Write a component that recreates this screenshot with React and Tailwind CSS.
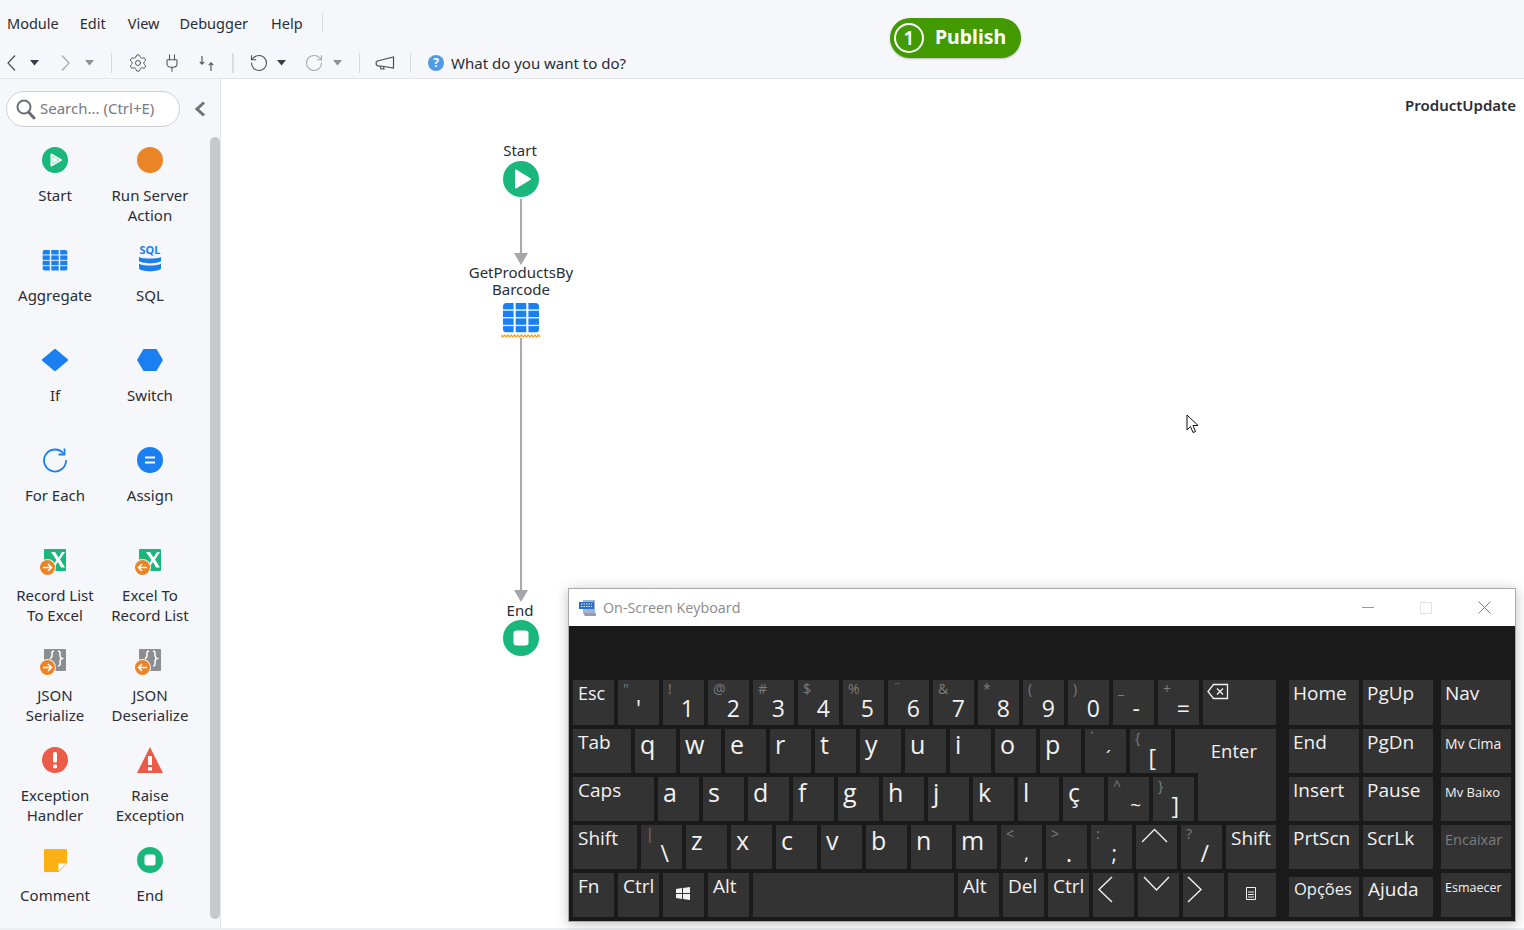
import React from "react";
import { Settings, Plug, RotateCcw, RotateCw } from "lucide-react";

const menuItems = [
  ["Module", "ml-[7px]"],
  ["Edit", "ml-[21px]"],
  ["View", "ml-[22px]"],
  ["Debugger", "ml-[20px]"],
  ["Help", "ml-[23px]"],
];

const Caret = ({ className, light }) => (
  <svg width="9" height="6" viewBox="0 0 9 6" className={className}>
    <path d="M0 0h9L4.5 5.5z" fill={light ? "#8c8f96" : "#3a3d45"} />
  </svg>
);

const NavChevron = ({ d, color, className }) => (
  <svg width="9" height="16" viewBox="0 0 9 16" fill="none" stroke={color} strokeWidth="1.2" className={className}>
    <path d={d} />
  </svg>
);

const ToolDivider = ({ className }) => <div className={`w-px h-5 bg-[#d9dbdf] ${className}`} />;

const Megaphone = () => (
  <svg width="20" height="14" viewBox="0 0 20 14" fill="none" stroke="#4a4d55" strokeWidth="1.2">
    <path d="M18.5 1v11L6 10H2.5L1.2 8.5V6L2.5 5z" />
    <path d="M5 10l1 3h3l-.6-2.6" />
  </svg>
);

const SwapArrows = () => (
  <svg width="17" height="17" viewBox="0 0 17 17" fill="none" stroke="#55585f" strokeWidth="1.2">
    <path d="M4 1v8M1.8 6.800L4 9.200l2.200-2.400" />
    <path d="M13 16V8M10.800 10.200L13 7.800l2.200 2.400" />
  </svg>
);

const Header = () => (
  <header className="h-[79px] border-b border-[#e3e4e7] flex shrink-0">
    <div className="w-[890px] flex flex-col">
      <nav className="flex items-center h-5 mt-[13px] text-[14.5px] leading-5 text-[#2a2d36]">
        {menuItems.map(([name, cls]) => (
          <span key={name} className={cls}>
            {name}
          </span>
        ))}
        <div className="w-px h-5 bg-[#dcdde0] ml-[19px]" />
      </nav>
      <div className="flex items-center h-6 mt-[18px] text-[15px] text-[#2a2d36]">
        <NavChevron d="M8 .5L1 8l7 7.500" color="#4a4d55" className="ml-[7px]" />
        <Caret className="ml-[14px]" />
        <NavChevron d="M1 .5L8 8l-7 7.500" color="#a5a7ac" className="ml-[22px]" />
        <Caret light className="ml-[15px]" />
        <ToolDivider className="ml-[17px]" />
        <Settings size={20} strokeWidth={1.2} color="#55585f" className="ml-[16px]" />
        <Plug size={20} strokeWidth={1.3} color="#55585f" className="ml-[14px]" />
        <div className="ml-[16px] flex">
          <SwapArrows />
        </div>
        <div className="w-[2px] h-5 bg-[#dcdde0] ml-[17px]" />
        <RotateCcw size={20} strokeWidth={1.3} color="#4a4d55" className="ml-[15px]" />
        <Caret className="ml-[8px]" />
        <RotateCw size={20} strokeWidth={1.3} color="#a5a7ac" className="ml-[18px]" />
        <Caret light className="ml-[9px]" />
        <ToolDivider className="ml-[17px]" />
        <div className="ml-[15px] flex">
          <Megaphone />
        </div>
        <ToolDivider className="ml-[15px]" />
        <div className="ml-[17px] w-4 h-4 rounded-full bg-[#4f9be8] text-white text-[12px] font-bold leading-4 text-center">
          ?
        </div>
        <span className="ml-[7px]">What do you want to do?</span>
      </div>
    </div>
    <div className="mt-[18px] w-[131px] h-10 rounded-full bg-[#429a00] shadow-[0_1px_2px_rgba(0,0,0,0.25)] flex items-center pl-[4px]">
      <div className="w-[30px] h-[30px] rounded-full border-2 border-white text-white text-[19px] font-semibold flex items-center justify-center">
        1
      </div>
      <span className="ml-[11px] -mt-[2px] text-white text-[19.500px] font-bold leading-none">Publish</span>
    </div>
  </header>
);

const BLUE = "#1a80f2";
const GREEN = "#19b77b";
const ORANGE = "#ea8427";
const RED = "#ec5a48";

const GridIcon = ({ w = 26, h = 21 }) => (
  <svg width={w} height={h} viewBox="0 0 36 30">
    <defs>
      <clipPath id={`grid-${w}`}>
        <rect width="36" height="29.500" rx="3.500" />
      </clipPath>
    </defs>
    <g clipPath={`url(#grid-${w})`}>
      {[0, 1, 2].map((c) =>
        [0, 1, 2, 3].map((r) => (
          <rect key={`${c}-${r}`} x={c * 12.7} y={r * 7.7} width="10.6" height="6.4" fill={BLUE} />
        ))
      )}
    </g>
  </svg>
);

const PlayIcon = () => (
  <svg width="26" height="26" viewBox="0 0 26 26">
    <circle cx="13" cy="13" r="13" fill={GREEN} />
    <path d="M9.500 7.500l9.500 5.500-9.500 5.500z" fill="none" stroke="#fff" strokeWidth="2" strokeLinejoin="round" />
    <path d="M10.500 9.500l6 3.500-6 3.500z" fill="#fff" />
  </svg>
);

const StopIcon = () => (
  <svg width="26" height="26" viewBox="0 0 26 26">
    <circle cx="13" cy="13" r="13" fill={GREEN} />
    <rect x="7.500" y="7.500" width="11" height="11" rx="2.500" fill="#fff" />
  </svg>
);

const SqlIcon = () => (
  <svg width="26" height="30" viewBox="0 0 26 30" className="-mt-[2px] overflow-visible">
    <text x="13" y="9.500" textAnchor="middle" fontSize="11" fontWeight="700" fontFamily="'Noto Sans', sans-serif" fill={BLUE}>
      SQL
    </text>
    <path d="M2 13c3 2 19 2 22 0v4c-3 3-19 3-22 0z" fill={BLUE} />
    <path d="M2 19.500c3 2.800 19 2.800 22 0v5c-2 3.600-20 3.600-22 0z" fill={BLUE} />
  </svg>
);

const BadgeIcon = ({ color, back, children }) => (
  <svg width="26" height="26" viewBox="0 0 26 26" className="overflow-visible">
    <rect x="2" y="2" width="22" height="22" rx="1" fill={color} />
    {children}
    <circle cx="5.500" cy="20.500" r="8.500" fill="#f6f7fa" />
    <circle cx="5.500" cy="20.500" r="7.500" fill={ORANGE} />
    {back ? (
      <path d="M10 20.500H1.500M5 17L1.500 20.500 5 24" stroke="#fff" strokeWidth="1.600" fill="none" />
    ) : (
      <path d="M1 20.500h8.500M6 17l3.500 3.500L6 24" stroke="#fff" strokeWidth="1.600" fill="none" />
    )}
  </svg>
);

const ExcelMark = () => <path d="M9 5h4l3.500 5.500L20 5h3l-5 7.500 5 8h-4l-3-5.500-4 5.500H9.500l5-7.500z" fill="#fff" />;
const JsonMark = () => (
  <>
    <path d="M12 4c-2.500 0-2 2-2 4s-.5 3-2 3.500" stroke="#fff" strokeWidth="1.500" fill="none" />
    <path d="M16 4c2.500 0 2 2 2 4s.5 3 2 3.500c-1.500.5-2 1.500-2 3.500s.5 4-2 4" stroke="#fff" strokeWidth="1.500" fill="none" />
  </>
);

const tools = [
  ["Start", <PlayIcon />],
  ["Run Server Action", <svg width="26" height="26"><circle cx="13" cy="13" r="13" fill={ORANGE} /></svg>],
  ["Aggregate", <GridIcon />],
  ["SQL", <SqlIcon />],
  ["If", <svg width="26" height="22" viewBox="0 0 26 22"><path d="M11.500.8a2 2 0 0 1 3 0L25.500 10a1.300 1.300 0 0 1 0 2L14.500 21.200a2 2 0 0 1-3 0L.5 12a1.300 1.300 0 0 1 0-2z" fill={BLUE} /></svg>],
  ["Switch", <svg width="26" height="22" viewBox="0 0 26 22"><path d="M6.500 0h13L26 11l-6.500 11h-13L0 11z" fill={BLUE} /></svg>],
  ["For Each", <svg width="26" height="26" viewBox="0 0 26 26" fill="none" stroke={BLUE} strokeWidth="1.800"><path d="M21.500 6.500A11 11 0 1 0 24 13" /><path d="M22.500 1.500v6h-6" /></svg>],
  ["Assign", <svg width="26" height="26" viewBox="0 0 26 26"><circle cx="13" cy="13" r="13" fill={BLUE} /><path d="M8 10.500h10M8 15.500h10" stroke="#fff" strokeWidth="2" /></svg>],
  ["Record List To Excel", <BadgeIcon color={GREEN}><ExcelMark /></BadgeIcon>],
  ["Excel To Record List", <BadgeIcon color={GREEN} back><ExcelMark /></BadgeIcon>],
  ["JSON Serialize", <BadgeIcon color="#8c8d90"><JsonMark /></BadgeIcon>],
  ["JSON Deserialize", <BadgeIcon color="#8c8d90" back><JsonMark /></BadgeIcon>],
  ["Exception Handler", <svg width="26" height="26" viewBox="0 0 26 26"><circle cx="13" cy="13" r="13" fill={RED} /><rect x="11" y="5" width="4" height="10.500" rx="1.500" fill="#fff" /><rect x="11" y="17.500" width="4" height="3.800" rx="1" fill="#fff" /></svg>],
  ["Raise Exception", <svg width="26" height="26" viewBox="0 0 26 26"><path d="M13 0l13 26H0z" fill={RED} /><rect x="11" y="9" width="4" height="9" fill="#fff" /><rect x="11" y="20" width="4" height="3.500" fill="#fff" /></svg>],
  ["Comment", <svg width="23" height="23" viewBox="0 0 23 23"><path d="M1.500 0h20A1.500 1.500 0 0 1 23 1.500V14.500L14.500 23h-13A1.500 1.500 0 0 1 0 21.500v-20A1.500 1.500 0 0 1 1.500 0z" fill="#fdb013" /><path d="M14.500 22v-7.500H22z" fill="#fff" /></svg>],
  ["End", <StopIcon />],
];

const Sidebar = () => (
  <aside className="w-[221px] shrink-0 border-r border-[#e3e4e7] flex">
    <div className="w-[210px]">
      <div className="flex items-center mt-[12px]">
        <div className="ml-[6px] w-[174px] h-9 rounded-full bg-white border border-[#cfd0d4] flex items-center pl-[8px]">
          <svg width="22" height="22" viewBox="0 0 22 22" fill="none" stroke="#6b6e75">
            <circle cx="9" cy="9" r="6.500" strokeWidth="2" />
            <path d="M13.500 14l5.500 6" strokeWidth="3" strokeLinecap="round" />
          </svg>
          <span className="ml-[3px] -mt-[2px] text-[15px] text-[#777a80]">Search... (Ctrl+E)</span>
        </div>
        <svg width="12" height="16" viewBox="0 0 12 16" fill="none" stroke="#6f7278" strokeWidth="3" className="ml-[14px]">
          <path d="M10 1.500L3 8l7 6.500" />
        </svg>
      </div>
      <div className="grid grid-cols-[94px_96px] pl-[8px] mt-[20px]">
        {tools.map(([name, icon]) => (
          <div key={name} className="h-[100px] flex flex-col items-center text-center">
            <div className="h-[26px] flex items-center justify-center">{icon}</div>
            <div className="mt-[12px] text-[15px] leading-5 text-[#2a2d36] w-[92px]">{name}</div>
          </div>
        ))}
      </div>
    </div>
    <div className="w-[10px] h-[782px] mt-[58px] rounded-full bg-[#c8c9cd]" />
  </aside>
);

const FlowLine = ({ h }) => <div className="w-[2px] bg-[#a9aaae]" style={{ height: h }} />;
const FlowArrow = () => (
  <svg width="14" height="12" viewBox="0 0 14 12" className="-mt-[1px]">
    <path d="M0 0h14L7 12z" fill="#a5a6aa" />
  </svg>
);

const Diagram = () => (
  <div className="absolute left-[200px] top-[63px] w-[200px] flex flex-col items-center text-[15px] leading-[17px] text-[#2a2d36]">
    <span className="-ml-[2px]">Start</span>
    <svg width="36" height="36" viewBox="0 0 36 36" className="mt-[2px]">
      <circle cx="18" cy="18" r="18" fill={GREEN} />
      <path d="M13 9.500l14 8.500-14 8.500z" fill="#fff" stroke="#fff" strokeWidth="2" strokeLinejoin="round" />
    </svg>
    <div className="mt-[2px]">
      <FlowLine h={55} />
    </div>
    <FlowArrow />
    <span className="text-center -mt-[1px]">
      GetProductsBy
      <br />
      Barcode
    </span>
    <div className="mt-[5px] flex">
      <GridIcon w={36} h={30} />
    </div>
    <svg width="40" height="4" viewBox="0 0 40 4" fill="none" stroke="#f0a030" strokeWidth="1.200" className="mt-[1px]">
      <path d="M0 1l1.700 2 1.700-2 1.700 2 1.700-2 1.700 2 1.700-2 1.700 2 1.700-2 1.700 2 1.700-2 1.700 2 1.700-2 1.700 2 1.700-2 1.700 2 1.700-2 1.700 2 1.700-2 1.700 2 1.700-2 1.700 2 1.700-2 1.700 2" />
    </svg>
    <FlowLine h={253} />
    <FlowArrow />
    <span className="-ml-[2px]">End</span>
    <svg width="36" height="36" viewBox="0 0 36 36" className="mt-[1px]">
      <circle cx="18" cy="18" r="18" fill={GREEN} />
      <rect x="10.500" y="10.500" width="15" height="15" rx="3" fill="#fff" />
    </svg>
  </div>
);

const MouseCursor = () => (
  <svg width="14" height="20" viewBox="0 0 14 20" className="absolute left-[965px] top-[335px]">
    <path d="M1 1v15l3.500-3.500 2.500 6 2.500-1-2.500-6h5z" fill="#fff" stroke="#111" strokeWidth="1" />
  </svg>
);

// shift symbol, main symbol, right margin of the main symbol
const row1 = [
  ['"', "'", "mr-[18px]"], ["!", "1", "mr-[10px]"], ["@", "2", "mr-[9px]"], ["#", "3", "mr-[9px]"],
  ["$", "4", "mr-[9px]"], ["%", "5", "mr-[10px]"], ["¨", "6", "mr-[9px]"], ["&", "7", "mr-[9px]"],
  ["*", "8", "mr-[9px]"], ["(", "9", "mr-[9px]"], [")", "0", "mr-[9px]"], ["_", "-", "mr-[14px]"], ["+", "=", "mr-[9px]"],
];

const Key = ({ w = 41, className = "", children }) => (
  <div className={`bg-[#333333] shrink-0 h-full flex flex-col ${className}`} style={{ width: w }}>
    {children}
  </div>
);

const LabelKey = ({ w, label, size = "text-[19px]", color = "text-[#f2f2f2]", pad = "pl-[5px] pt-[1px]", className = "" }) => (
  <Key w={w} className={className}>
    <span className={`leading-[24px] whitespace-nowrap ${pad} ${size} ${color}`}>{label}</span>
  </Key>
);

const LetterKey = ({ label }) => (
  <Key>
    <span className="pl-[5px] text-[25px] leading-[30px] text-[#f2f2f2]">{label}</span>
  </Key>
);

const SymbolKey = ({ up, main, mr = "mr-[11px]", size = "text-[23px]" }) => (
  <Key>
    <span className="pl-[5px] pt-[1px] text-[14px] leading-[15px] text-[#7d7d7d]">{up}</span>
    <span className={`self-end leading-[24px] text-[#f2f2f2] ${mr} ${size}`}>{main}</span>
  </Key>
);

const Chevron = ({ d, w, h, className }) => (
  <svg width={w} height={h} viewBox={`0 0 ${w} ${h}`} fill="none" stroke="#f2f2f2" strokeWidth="1.400" className={className}>
    <path d={d} />
  </svg>
);

const Row = ({ children, h = "h-[44px]" }) => <div className={`flex gap-1 ${h}`}>{children}</div>;

const MainKeys = () => (
  <div className="w-[703px] flex flex-col gap-1">
    <Row h="h-[45px]">
      <LabelKey label="Esc" size="text-[18px]" />
      {row1.map(([up, main, mr]) => (
        <SymbolKey key={main} up={up} main={main} mr={mr} />
      ))}
      <Key w={73}>
        <svg width="22" height="17" viewBox="0 0 22 17" fill="none" stroke="#f2f2f2" strokeWidth="1.300" className="ml-[4px] mt-[3px]">
          <path d="M6.500 1.500h14v14h-14L1 8.500zM10 5.500l6 6M16 5.500l-6 6" />
        </svg>
      </Key>
    </Row>
    <Row>
      <LabelKey w={58} label="Tab" />
      {"qwertyuiop".split("").map((k) => (
        <LetterKey key={k} label={k} />
      ))}
      <SymbolKey up="`" main="´" mr="mr-[15px]" size="text-[19px]" />
      <SymbolKey up="{" main="[" mr="mr-[15px]" />
      <Key w={101}>
        <span className="self-end mr-[19px] mt-[8px] text-[18.500px] leading-[28px] text-[#f2f2f2]">Enter</span>
      </Key>
    </Row>
    <Row>
      <LabelKey w={81} label="Caps" />
      {"asdfghjkl".split("").map((k) => (
        <LetterKey key={k} label={k} />
      ))}
      <LetterKey label="ç" />
      <SymbolKey up="^" main="~" mr="mr-[8px]" size="text-[19px]" />
      <SymbolKey up="}" main="]" mr="mr-[15px]" />
      <Key w={78} className="-mt-1 !h-[48px]" />
    </Row>
    <Row>
      <LabelKey w={64} label="Shift" />
      <SymbolKey up="|" main="\" mr="mr-[13px]" />
      {"zxcvbnm".split("").map((k) => (
        <LetterKey key={k} label={k} />
      ))}
      <SymbolKey up="<" main="," mr="mr-[13px]" size="text-[19px]" />
      <SymbolKey up=">" main="." mr="mr-[15px]" />
      <SymbolKey up=":" main=";" mr="mr-[15px]" size="text-[21px]" />
      <Key>
        <Chevron d="M1 14L13.500 1.500 26 14" w={27} h={15} className="ml-[5px] mt-[3px]" />
      </Key>
      <SymbolKey up="?" main="/" mr="mr-[13px]" />
      <LabelKey w={50} label="Shift" />
    </Row>
    <Row>
      <LabelKey label="Fn" />
      <LabelKey label="Ctrl" />
      <Key>
        <svg width="14" height="13" viewBox="0 0 14 13" fill="#f2f2f2" className="ml-[13px] mt-[14px]">
          <path d="M0 2l6-.9V6H0zM7 1l7-1v6H7zM0 7h6v4.900L0 11zM7 7h7v6l-7-1z" />
        </svg>
      </Key>
      <LabelKey label="Alt" />
      <Key w={201} />
      <LabelKey label="Alt" />
      <LabelKey label="Del" />
      <LabelKey label="Ctrl" />
      <Key>
        <Chevron d="M15 1L2 13.500 15 26" w={16} h={27} className="ml-[4px] mt-[3px]" />
      </Key>
      <Key>
        <Chevron d="M1 1l12.500 13L26 1" w={27} h={16} className="ml-[5px] mt-[3px]" />
      </Key>
      <Key>
        <Chevron d="M1 1l13 12.500L1 26" w={16} h={27} className="ml-[4px] mt-[3px]" />
      </Key>
      <Key w={48}>
        <svg width="10" height="13" viewBox="0 0 10 13" fill="none" stroke="#f2f2f2" className="ml-[18px] mt-[14px]">
          <path d="M.5.500h9v12h-9zM2 5h6M2 7.500h6M2 10h6" />
        </svg>
      </Key>
    </Row>
  </div>
);

const NAV_PAD = "pl-[4px] pt-[1px]";
const SMALL_PAD = "pl-[4px] pt-[3px]";

const NavKeys = () => (
  <div className="ml-[13px] flex flex-col gap-1">
    <Row h="h-[45px]">
      <LabelKey w={70} label="Home" pad={NAV_PAD} />
      <LabelKey w={70} label="PgUp" pad={NAV_PAD} />
      <LabelKey w={70} label="Nav" pad={NAV_PAD} className="ml-[4px]" />
    </Row>
    <Row>
      <LabelKey w={70} label="End" pad={NAV_PAD} />
      <LabelKey w={70} label="PgDn" pad={NAV_PAD} />
      <LabelKey w={70} label="Mv Cima" size="text-[14px]" pad={SMALL_PAD} className="ml-[4px]" />
    </Row>
    <Row>
      <LabelKey w={70} label="Insert" pad={NAV_PAD} />
      <LabelKey w={70} label="Pause" pad={NAV_PAD} />
      <LabelKey w={70} label="Mv Baixo" size="text-[13px]" pad={SMALL_PAD} className="ml-[4px]" />
    </Row>
    <Row>
      <LabelKey w={70} label="PrtScn" pad={NAV_PAD} />
      <LabelKey w={70} label="ScrLk" pad={NAV_PAD} />
      <LabelKey w={70} label="Encaixar" size="text-[14.500px]" color="text-[#7d7d7d]" pad={SMALL_PAD} className="ml-[4px]" />
    </Row>
    <Row>
      <LabelKey w={70} label="Opções" size="text-[16.500px]" pad="pl-[5px]" className="mt-1 !h-[40px]" />
      <LabelKey w={70} label="Ajuda" pad="pl-[5px]" className="mt-1 !h-[40px]" />
      <LabelKey w={70} label="Esmaecer" size="text-[12.500px]" pad={SMALL_PAD} className="ml-[4px]" />
    </Row>
  </div>
);

const Keyboard = () => (
  <div className="absolute left-[568px] top-[588px] w-[948px] h-[334px] border border-[#a9a9a9] bg-[#1a1a1a] shadow-[0_2px_12px_rgba(0,0,0,0.25)] font-['Open_Sans',sans-serif]">
    <div className="h-[37px] bg-white flex items-center">
      <svg width="20" height="18" viewBox="0 0 20 18" className="ml-[9px]">
        <rect x="5" y="1" width="12" height="13" fill="#9fb4d8" />
        <rect x="1" y="3" width="15" height="7" fill="#2f6fc0" />
        <path d="M3 5h11M3 7.500h11" stroke="#d7e6f8" strokeDasharray="1.500 1" />
        <path d="M5 14h13v3H7z" fill="#9a9da3" />
      </svg>
      <span className="ml-[5px] text-[14.300px] text-[#8a8a8a]">On-Screen Keyboard</span>
      <div className="ml-auto mr-[24px] flex items-center">
        <div className="w-3 h-px bg-[#9a9a9a]" />
        <div className="ml-[46px] w-3 h-3 border border-[#e2e2e2]" />
        <svg width="13" height="13" viewBox="0 0 13 13" stroke="#7d7d7d" className="ml-[46px]">
          <path d="M.5.500l12 12M12.500.500l-12 12" />
        </svg>
      </div>
    </div>
    <div className="flex pl-[4px] pt-[54px]">
      <MainKeys />
      <NavKeys />
    </div>
  </div>
);

export default function App() {
  return (
    <div className="relative w-[1524px] h-[930px] overflow-hidden flex flex-col bg-[#f6f7fa] font-['Noto_Sans',sans-serif]">
      <Header />
      <div className="flex h-[849px]">
        <Sidebar />
        <main className="relative flex-1 bg-white">
          <div className="text-right pr-[8px] pt-[15px] text-[15px] font-semibold text-[#2a2d36]">ProductUpdate</div>
          <Diagram />
          <MouseCursor />
        </main>
      </div>
      <div className="flex-1 bg-[#eceef1]" />
      <Keyboard />
    </div>
  );
}
